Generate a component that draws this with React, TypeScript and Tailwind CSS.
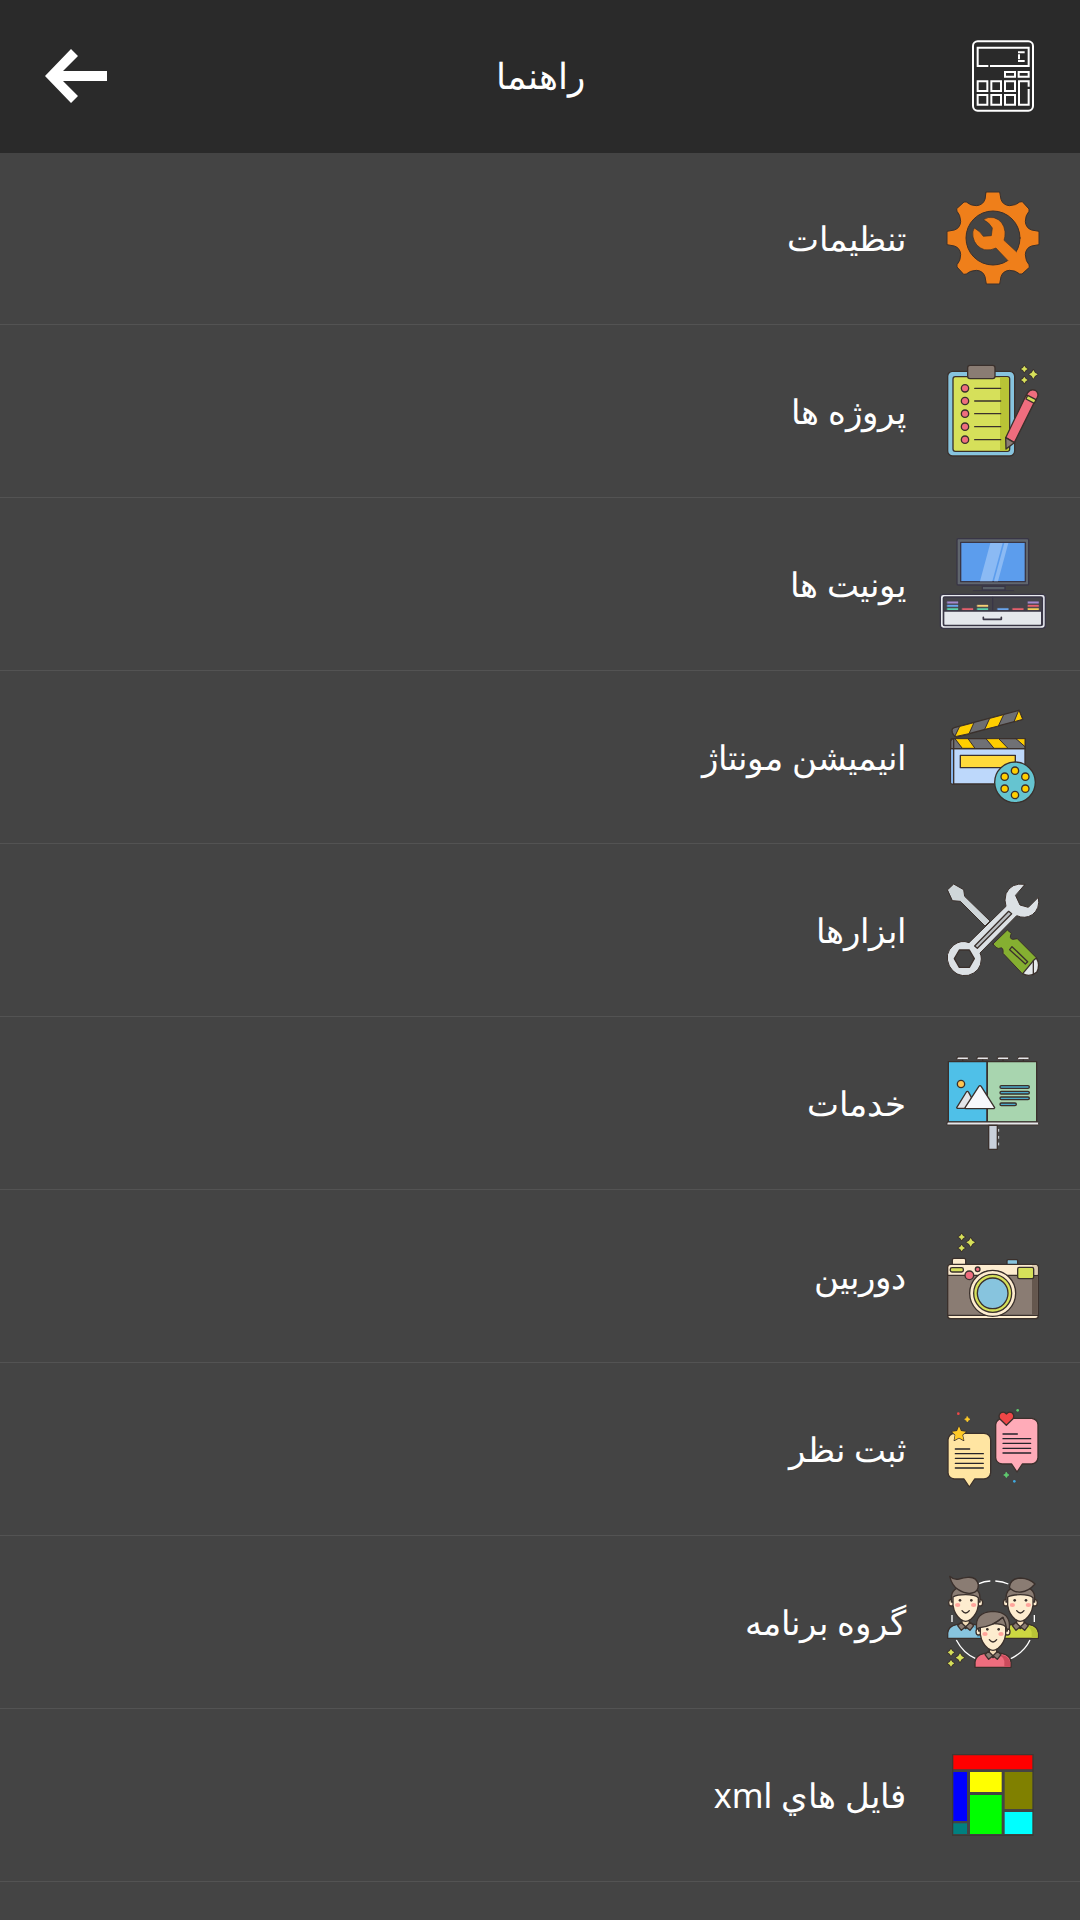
import type { ReactNode } from 'react';

const INK = '#3a302c';

type IconProps = { viewBox: string; children: ReactNode };

function Icon({ viewBox, children }: IconProps) {
  return (
    <svg
      viewBox={viewBox}
      className="h-[100px] w-[110px] shrink-0"
      fill="none"
      stroke={INK}
      strokeWidth="4"
      strokeLinecap="round"
      strokeLinejoin="round"
      aria-hidden="true"
    >
      {children}
    </svg>
  );
}

function Sparkles({ x, y }: { x: number; y: number }) {
  return (
    <g transform={`translate(${x} ${y})`} fill="#d6e05a" strokeWidth="5" style={{ paintOrder: 'stroke' }}>
      <path d="M0 -26 L4 -20 L10 -16 L4 -12 L0 -6 L-4 -12 L-10 -16 L-4 -20Z" />
      <path d="M0 7 L4 13 L10 17 L4 21 L0 27 L-4 21 L-10 17 L-4 13Z" />
      <path d="M27 -13 L32 -5 L40 0 L32 5 L27 13 L22 5 L14 0 L22 -5Z" />
    </g>
  );
}

function SettingsIcon() {
  return (
    <Icon viewBox="24 57 330 300">
      <path
        transform="translate(189 204)"
        fill="#ef7f1a"
        strokeWidth="3"
        d="M-20 -138 L20 -138 L24 -116 Q30 -98 50 -97 Q70 -98 80 -108 L88 -109 L108 -87 L108 -80 Q97 -68 97 -50 Q98 -30 116 -24 L138 -20 L138 20 L116 24 Q98 30 97 50 Q98 70 108 80 L109 88 L87 108 L80 108 Q68 97 50 97 Q30 98 24 116 L20 138 L-20 138 L-24 116 Q-30 98 -50 97 Q-70 98 -80 108 L-88 109 L-108 87 L-108 80 Q-97 68 -97 50 Q-98 30 -116 24 L-138 20 L-138 -20 L-116 -24 Q-98 -30 -97 -50 Q-98 -70 -108 -80 L-109 -88 L-87 -108 L-80 -108 Q-68 -97 -50 -97 Q-30 -98 -24 -116Z"
      />
      <circle cx="189" cy="204" r="81" fill="#444" strokeWidth="3" />
      <path fill="#ef7f1a" stroke="none" d="M222 211 L268 254 L242 280 L198 234Z" />
      <path
        fill="#ef7f1a"
        strokeLinecap="butt"
        strokeWidth="2"
        d="M260 246 L222 211 Q226 200 225 185 Q221 152 192 143 Q174 139 160 149 Q178 157 187 174 L184 197 L160 199 Q150 183 133 174 Q126 184 129 201 Q135 230 163 239 Q184 242 198 234 L234 272"
      />
    </Icon>
  );
}

const bulletRows = [115, 153, 191, 230, 269];

function ProjectsIcon() {
  return (
    <Icon viewBox="24 33 330 300">
      <rect x="53" y="64" width="201" height="254" rx="15" fill="#87c4de" />
      <rect x="69" y="80" width="170" height="224" rx="7" fill="#d6e05a" />
      <path d="M210 82 H231 Q237 82 237 88 V296 Q237 302 231 302 H210Z" fill="#b9c436" stroke="none" />
      <rect x="113" y="46" width="82" height="40" rx="7" fill="#8a7c73" />
      {bulletRows.map((y) => (
        <g key={y}>
          <circle cx="105" cy={y} r="11" fill="#ef6d7e" />
          <path d={`M134 ${y}H212`} />
        </g>
      ))}
      <path d="M289 134 L317 149 L253 278 L227 263Z" fill="#ef6d7e" />
      <path d="M292 129 Q302 115 316 121 Q329 131 321 144 L317 151 L290 136Z" fill="#ef6d7e" />
      <path d="M293 136 L318 149 L313 160 L288 147Z" fill="#d6e05a" />
      <path d="M227 263 L253 278 L228 297Z" fill="#8a7c73" />
      <Sparkles x={283} y={73} />
    </Icon>
  );
}

const books: [number, number, string][] = [
  [52, 230, '#a58bd0'],
  [52, 240, '#6ba6ef'],
  [52, 250, '#5bd3ad'],
  [97, 250, '#e8606e'],
  [142, 240, '#f7cf76'],
  [142, 250, '#5bd3ad'],
  [203, 250, '#6ba6ef'],
  [248, 250, '#e8606e'],
  [294, 230, '#a58bd0'],
  [294, 240, '#e8606e'],
  [294, 250, '#f7cf5c'],
];

function UnitsIcon() {
  return (
    <Icon viewBox="24 27 330 300">
      <g stroke="#393646">
        <path d="M130 197H251" strokeWidth="3" />
        <rect x="157" y="184" width="68" height="11" fill="#596068" />
        <rect x="81" y="41" width="215" height="139" rx="4" fill="#60666e" />
        <rect x="92" y="52" width="194" height="118" fill="#5c9ded" />
        <path d="M181 54 H218 L187 169 H150Z M223 54 H235 L204 169 H192Z" fill="#8bbaf4" stroke="none" />
        <rect x="31" y="208" width="315" height="102" rx="9" fill="#e9ebf0" />
        <path d="M335 214 Q341 214 341 220 V298 Q341 304 335 304Z" fill="#c8cad6" stroke="none" />
        <rect x="40" y="216" width="297" height="86" rx="4" fill="#444349" />
        <path d="M188 217V257" />
        {books.map(([x, y, color]) => (
          <rect key={`${x}-${y}`} x={x} y={y} width="32" height="5" fill={color} stroke={color} strokeWidth="1" />
        ))}
        <path d="M41 258 H335 V298 Q335 301 331 301 H45 Q41 301 41 298Z" fill="#e5e8ed" />
        <path d="M160 277V283H214V277" strokeWidth="5" />
      </g>
    </Icon>
  );
}

const reelHoles = [
  [255, 212],
  [286, 230],
  [286, 266],
  [255, 285],
  [224, 266],
  [224, 230],
];

function AnimationIcon() {
  return (
    <Icon viewBox="24 21 330 300">
      <path d="M66 91 Q66 85 73 83 L267 31 L278 58 L80 111 Q70 108 67 98Z" fill="#6d6e72" />
      <path
        d="M90 79 L132 68 L117 101 L75 110Z M180 55 L221 44 L205 78 L165 88Z M267 31 L278 58 L253 65Z"
        fill="#ffce00"
        strokeWidth="3"
      />
      <rect x="62" y="116" width="223" height="136" rx="5" fill="#bdd8fb" />
      <path d="M64 146H70V250H64Z" fill="#85b7f3" stroke="none" />
      <path d="M71 116 H285 V146 H62 V124 Q63 117 71 116Z" fill="#707175" />
      <path
        d="M76 116 H114 L135 145 H98Z M169 116 H206 L234 145 H193Z M259 116 H285 V139Z"
        fill="#ffce00"
        strokeWidth="3"
      />
      <path d="M71 118V251M62 146H285" />
      <rect x="91" y="166" width="165" height="37" fill="#ffda3b" />
      <circle cx="255" cy="247" r="61" fill="#65c4d0" />
      {reelHoles.map(([cx, cy]) => (
        <circle key={`${cx}-${cy}`} cx={cx} cy={cy} r="11" fill="#ffce00" />
      ))}
    </Icon>
  );
}

function ToolsIcon() {
  return (
    <Icon viewBox="24 30 330 300">
      <path d="M53 59 L71 42 L101 59 L104 79 L180 153 L165 168 L91 94 L68 92Z" fill="#cfd6d9" strokeWidth="3" />
      <path
        d="M189 222 L232 180 L244 190 Q236 207 249 208 L262 206 L319 263 Q332 286 320 307 Q299 323 276 310 L219 250 Q221 231 211 234 Q202 240 189 222Z"
        fill="#85af31"
        strokeWidth="3"
      />
      <path d="M278 311 L311 271 L319 264 Q332 286 320 307 Q299 323 278 311Z" fill="#e4e8eb" />
      <path d="M310 272V314" />
      <path d="M246 230 L293 275 L286 282 L239 239Z" />
      <path
        fill="#dce1e5"
        strokeWidth="3"
        d="M284 43 Q243 37 228 71 Q222 91 228 109 L117 218 Q93 208 70 226 Q41 251 58 288 Q77 322 115 316 Q153 305 154 267 Q154 257 150 249 L260 137 Q285 148 307 134 Q331 116 325 82 L295 112 L270 105 L257 77Z"
      />
      <path d="M88 240 H118 L133 266 L118 292 H88 L73 266Z" fill="#444" />
      <path d="M236 124 L245 131 L142 235 L134 228Z" fill="#b9bdc0" />
    </Icon>
  );
}

function ServicesIcon() {
  return (
    <Icon viewBox="24 24 330 300">
      {[81, 141, 202, 263].map((x) => (
        <g key={x}>
          <rect x={x} y="36" width="34" height="8" rx="2" fill="#e6e7ea" strokeWidth="3" />
          <path d={`M${x + 17} 45V48`} />
        </g>
      ))}
      <rect x="55" y="50" width="116" height="181" fill="#4fc0e8" />
      <rect x="172" y="50" width="148" height="181" fill="#a8d5af" />
      <circle cx="93" cy="117" r="11" fill="#ffc553" />
      <path d="M80 188 L109 141 Q112 137 116 142 L142 190 H82Z" fill="#e3e5e9" />
      <path d="M105 188 L146 125 Q150 119 154 125 L194 188 L192 191 H107Z" fill="#f7f8fb" />
      {[122, 139, 156].map((y) => (
        <rect key={y} x="210" y={y} width="88" height="8" rx="4" fill="#4ba9ca" />
      ))}
      <rect x="210" y="174" width="49" height="8" rx="4" fill="#4ba9ca" />
      <rect x="51" y="231" width="275" height="9" rx="2" fill="#e6e7ea" strokeWidth="3" />
      <rect x="176" y="241" width="26" height="72" fill="#c9d0da" />
      {[256, 277, 297].map((y) => (
        <path key={y} d={`M206 ${y - 3}V${y + 3}`} stroke="#d5d8dc" strokeWidth="3" />
      ))}
    </Icon>
  );
}

function CameraIcon() {
  return (
    <Icon viewBox="24 18 330 300">
      <Sparkles x={95} y={67} />
      <rect x="67" y="115" width="40" height="22" rx="5" fill="#fdeccf" />
      <rect x="231" y="119" width="32" height="18" rx="3" fill="#87c4de" />
      <rect x="53" y="133" width="272" height="163" rx="9" fill="#fdeccf" />
      <path d="M53 166H325V286H53Z" fill="#8a7c73" />
      <path d="M306 168H323V284H306Z" fill="#65574e" stroke="none" />
      <path d="M306 135H315Q323 136 323 143V164H306Z" fill="#dfcdb0" stroke="none" />
      <rect x="61" y="143" width="39" height="13" rx="5" fill="#d6e05a" />
      <circle cx="143" cy="148" r="7" fill="#ef6d7e" />
      <circle cx="118" cy="166" r="13" fill="#ef6d7e" />
      <rect x="263" y="142" width="48" height="34" rx="5" fill="#d6e05a" />
      <circle cx="188" cy="220" r="69" fill="#fdeccf" />
      <circle cx="188" cy="220" r="57" fill="#d6e05a" />
      <circle cx="188" cy="220" r="46" fill="#87c4de" />
    </Icon>
  );
}

function FeedbackIcon() {
  return (
    <Icon viewBox="24 12 330 300">
      <path
        d="M73 115 H162 Q181 117 182 134 V233 Q180 250 162 252 H134 L118 276 L102 252 H73 Q55 249 54 233 V134 Q56 117 73 115Z"
        fill="#ffe5a2"
      />
      <path
        d="M216 70 H305 Q323 73 324 89 V188 Q322 205 305 207 H277 L261 231 L245 207 H216 Q198 204 197 188 V89 Q199 73 216 70Z"
        fill="#ffabb8"
      />
      <g stroke="#25232a">
        <path d="M76 162H119M76 176H160M76 190H160M76 205H160M76 219H160" />
        <path d="M219 117H262M219 131H302M219 145H302M219 160H302M219 174H302" />
      </g>
      <path
        d="M87 94 L93 108 L108 110 L97 120 L101 136 L87 128 L73 136 L76 120 L66 110 L81 108Z"
        fill="#ffca27"
        style={{ paintOrder: 'stroke' }}
      />
      <path d="M229 91 L209 71 Q204 60 213 53 Q223 48 229 57 Q236 48 246 53 Q255 61 249 71Z" fill="#f04747" />
      <path
        d="M112 65 L115 70 L120 73 L115 76 L112 81 L109 76 L104 73 L109 70Z"
        fill="#ffca27"
        stroke="#ffca27"
        strokeWidth="2"
      />
      <path
        d="M229 232 L232 237 L237 240 L232 243 L229 248 L226 243 L221 240 L226 237Z"
        fill="#5fcb6f"
        stroke="#5fcb6f"
        strokeWidth="2"
      />
      <g stroke="none">
        <circle cx="85" cy="56" r="4" fill="#f04747" />
        <circle cx="263" cy="46" r="4" fill="#5fcb6f" />
        <circle cx="253" cy="259" r="4" fill="#3fa9e0" />
      </g>
    </Icon>
  );
}

type PersonProps = { x: number; y: number; shirt: string; shade: string; hair: string; parting?: string };

function Person({ x, y, shirt, shade, hair, parting }: PersonProps) {
  return (
    <g transform={`translate(${x} ${y})`}>
      <path d="M-54 107 V91 Q-52 71 -28 66 L0 60 L28 66 Q52 71 54 91 V107Z" fill={shirt} />
      <path d="M20 70 Q44 68 52 92 V105 H34 V88 Q30 76 20 70Z" fill={shade} stroke="none" />
      <path d="M-11 50 H11 V68 L0 78 L-11 68Z" fill="#f3dcb8" />
      <path d="M-14 59 L-24 69 L-13 83 L0 72 L13 83 L24 69 L14 59 L0 72Z" fill="#8a7c73" />
      <ellipse cx="-43" cy="0" rx="8" ry="10" fill="#fdeccf" />
      <ellipse cx="43" cy="0" rx="8" ry="10" fill="#fdeccf" />
      <path d="M-43 -14 Q-43 -48 0 -49 Q43 -48 43 -14 V-2 H-43Z" fill="#8a7c73" />
      <path
        d="M-38 -17 Q-26 -24 0 -24 Q28 -24 38 -15 V8 Q34 36 14 51 Q0 61 -14 51 Q-34 36 -38 8Z"
        fill="#fdeccf"
      />
      <path d={hair} fill="#8a7c73" />
      {parting && <path d={parting} />}
      <ellipse cx="-24" cy="7" rx="8" ry="6" fill="#ffa49b" stroke="none" />
      <ellipse cx="24" cy="7" rx="8" ry="6" fill="#ffa49b" stroke="none" />
      <circle cx="-17" cy="-7" r="4" fill={INK} stroke="none" />
      <circle cx="17" cy="-7" r="4" fill={INK} stroke="none" />
      <path d="M-11 24 Q0 38 11 24" />
    </g>
  );
}

function GroupIcon() {
  return (
    <Icon viewBox="24 21 330 300">
      <path
        stroke="#fff"
        strokeLinecap="butt"
        d="M147 56 Q162 49 181 48M196 48 Q219 50 235 57M66 171V150M313 171V150M79 225 Q99 264 137 281M300 225 Q282 263 240 282"
      />
      <Person
        x={107}
        y={113}
        shirt="#87c4de"
        shade="#62a8c6"
        hair="M-48 -79 Q-37 -68 -20 -71 Q-5 -75 6 -76 Q34 -78 38 -53 Q38 -32 19 -29 Q0 -25 -22 -39 Q-40 -49 -48 -79Z"
      />
      <Person
        x={271}
        y={113}
        shirt="#cdd741"
        shade="#b9c436"
        hair="M-33 -46 Q-30 -73 1 -74 Q29 -72 44 -56 Q25 -34 2 -32 Q-20 -30 -33 -46Z"
      />
      <Person
        x={189}
        y={200}
        shirt="#ef6d7e"
        shade="#cc4b5c"
        hair="M-49 -8 Q-56 -59 0 -61 Q55 -59 49 -7 L41 -8 Q38 -28 30 -43 Q-4 -14 -40 -12Z"
        parting="M30 -43 Q15 -31 0 -23"
      />
      <Sparkles x={63} y={278} />
    </Icon>
  );
}

function XmlIcon() {
  return (
    <Icon viewBox="774 15 330 300">
      <g stroke="none">
        <path d="M816 42H1061V288H816Z" fill="#3b3a35" />
        <path d="M820 88H1057V284H820Z" fill="#444" />
        <path d="M820 46H1057V88H820Z" fill="#f00" />
        <path d="M820 96H861V243H820Z" fill="#00f" />
        <path d="M820 250H861V282H820Z" fill="#008080" />
        <path d="M870 96H965V156H870Z" fill="#ff0" />
        <path d="M870 165H965V282H870Z" fill="#0f0" />
        <path d="M974 96H1057V207H974Z" fill="#808000" />
        <path d="M974 216H1057V282H974Z" fill="#0ff" />
      </g>
    </Icon>
  );
}

const items = [
  { label: 'تنظیمات', icon: SettingsIcon },
  { label: 'پروژه ها', icon: ProjectsIcon },
  { label: 'یونیت ها', icon: UnitsIcon },
  { label: 'انیمیشن مونتاژ', icon: AnimationIcon },
  { label: 'ابزارها', icon: ToolsIcon },
  { label: 'خدمات', icon: ServicesIcon },
  { label: 'دوربین', icon: CameraIcon },
  { label: 'ثبت نظر', icon: FeedbackIcon },
  { label: 'گروه برنامه', icon: GroupIcon },
  { label: 'فایل هاي xml', icon: XmlIcon },
];

function Header() {
  return (
    <header className="flex h-[153px] items-center justify-between bg-[#2a2a2a] px-11 pb-0.5">
      <button type="button" aria-label="ماشین حساب" className="cursor-pointer">
        <svg viewBox="66 57 192 222" className="h-[74px] w-16" fill="none" stroke="#fff" strokeWidth="6">
          <rect x="69" y="64" width="180" height="208" rx="14" />
          <path d="M115 138 H83 V83 H236 V138 H120" />
          <path d="M224 97H204M207 103V118M224 123H204" />
          <path d="M165 156H195V170H165ZM206 156H236V170H206Z" />
          <path d="M83 184H112V213H83ZM124 184H153V213H124ZM165 184H195V213H165Z" />
          <path d="M83 225H112V254H83ZM124 225H153V254H124ZM165 225H195V254H165Z" />
          <path d="M236 200V184H207V254H236V207" />
        </svg>
      </button>
      <h1 className="text-4xl">راهنما</h1>
      <button type="button" aria-label="بازگشت" className="cursor-pointer">
        <svg viewBox="0 0 64 54" className="h-[54px] w-16" fill="#fff">
          <path d="M1 27 L27 0 L34 7 L19 22 H63 V32 H19 L34 47 L27 54Z" />
        </svg>
      </button>
    </header>
  );
}

export default function App() {
  return (
    <div
      dir="rtl"
      lang="fa"
      className="min-h-screen bg-[#444444] font-['Noto_Sans','Open_Sans',sans-serif] text-white"
    >
      <Header />
      <nav>
        <ul>
          {items.map(({ label, icon: ItemIcon }) => (
            <li key={label} className="h-[173px] border-b border-[#535353] first:h-[172px]">
              <a href="#" className="flex h-full items-center gap-8 px-8">
                <ItemIcon />
                <span className="text-[34px]">{label}</span>
              </a>
            </li>
          ))}
        </ul>
      </nav>
    </div>
  );
}
